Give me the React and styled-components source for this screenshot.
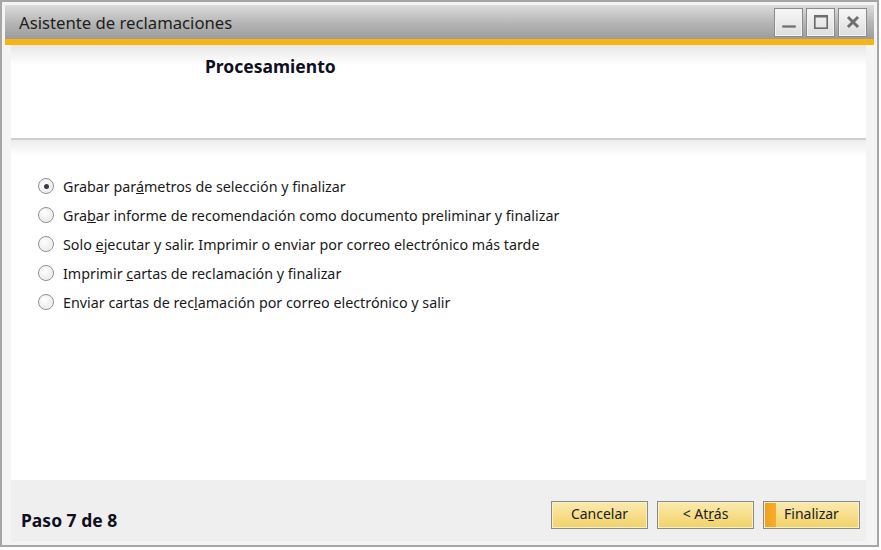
import React, { useState } from "react";
import styled, { createGlobalStyle } from "styled-components";

const GlobalStyle = createGlobalStyle`
  body {
    margin: 0;
    background: #ffffff;
    font-family: "Noto Sans", "DejaVu Sans", sans-serif;
  }
`;

const Window = styled.div`
  box-sizing: border-box;
  width: 879px;
  height: 547px;
  border: 2px solid #a6a6a6;
  background: #f4f4f4;
  padding: 3px 3px 4px 3px;
  display: flex;
  flex-direction: column;
`;

const TitleBar = styled.div`
  height: 34px;
  flex-shrink: 0;
  display: flex;
  align-items: center;
  justify-content: space-between;
  padding: 0 8px 0 14px;
  background: linear-gradient(#dcdcdc, #b4b4b4 55%, #9c9c9c);
  border-bottom: 6px solid #f7b416;
`;

const Title = styled.span`
  font-size: 16.7px;
  color: #1e1e1e;
`;

const Controls = styled.div`
  display: flex;
  gap: 5px;
`;

const CtrlButton = styled.div`
  width: 27px;
  height: 27px;
  box-sizing: border-box;
  border: 1px solid #f2f2f2;
  outline: 1px solid #8c8c8c;
  background: linear-gradient(#f6f6f6, #dedede);
  display: flex;
  align-items: center;
  justify-content: center;
`;

const Body = styled.div`
  flex: 1;
  display: flex;
  flex-direction: column;
  margin: 0 8px 0 6px;
  background: #ffffff;
`;

const Header = styled.div`
  height: 95px;
  flex-shrink: 0;
  background: linear-gradient(#e6e6e6, #ffffff 20px);
  border-bottom: 2px solid #cfcfcf;
  padding-left: 194px;
  box-sizing: border-box;
`;

const HeaderTitle = styled.div`
  font-weight: 700;
  font-size: 17.5px;
  color: #101020;
  padding-top: 9px;
`;

const Content = styled.div`
  flex: 1;
  background: linear-gradient(#ececec, #ffffff 16px);
  padding: 36px 0 0 27px;
  display: flex;
  flex-direction: column;
  gap: 9px;
`;

const Option = styled.label`
  display: flex;
  align-items: center;
  gap: 9px;
  font-size: 14.3px;
  color: #1a1a1a;
  height: 20px;
  cursor: default;
`;

const Radio = styled.span`
  width: 16px;
  height: 16px;
  flex-shrink: 0;
  box-sizing: border-box;
  border-radius: 50%;
  border: 1px solid #909090;
  box-shadow: inset 0 0 0 1px #f4f4f4;
  background: radial-gradient(circle at 40% 35%, #ffffff, #e2e2e2);
  display: flex;
  align-items: center;
  justify-content: center;

  &::after {
    content: "";
    width: 5px;
    height: 5px;
    border-radius: 50%;
    background: #3a3a48;
    display: ${(p) => (p.$checked ? "block" : "none")};
  }
`;

const U = styled.span`
  text-decoration: underline;
`;

const Footer = styled.div`
  height: 61px;
  flex-shrink: 0;
  background: #efefef;
  display: flex;
  align-items: center;
  justify-content: space-between;
  padding: 0 6px 0 10px;
`;

const Step = styled.div`
  font-weight: 700;
  font-size: 17.5px;
  color: #101020;
  padding-top: 18px;
`;

const Buttons = styled.div`
  display: flex;
  gap: 9px;
  padding-top: 8px;
`;

const Button = styled.button`
  width: 97px;
  height: 28px;
  box-sizing: border-box;
  border: 1px solid #8a8a8a;
  background: ${(p) =>
    p.$primary
      ? "linear-gradient(90deg, #f0a020 0, #f6ac2c 12px, transparent 12px), linear-gradient(#faeab0, #f2d266)"
      : "linear-gradient(#faeab0, #f2d266)"};
  font-family: "Noto Sans", "DejaVu Sans", sans-serif;
  font-size: 14px;
  color: #202020;
  padding: 0 0 3px 0;
  box-shadow: inset 0 0 0 1px #fbf1c8;
`;

const options = [
  [<>Grabar par<U>á</U>metros de selección y finalizar</>, true],
  [<>Gra<U>b</U>ar informe de recomendación como documento preliminar y finalizar</>, false],
  [<>Solo <U>e</U>jecutar y salir. Imprimir o enviar por correo electrónico más tarde</>, false],
  [<>Imprimir <U>c</U>artas de reclamación y finalizar</>, false],
  [<>Enviar cartas de rec<U>l</U>amación por correo electrónico y salir</>, false],
];

export default function App() {
  const [sel, setSel] = useState(0);
  return (
    <>
      <GlobalStyle />
      <Window>
        <TitleBar>
          <Title>Asistente de reclamaciones</Title>
          <Controls>
            <CtrlButton>
              <svg width="18" height="18" viewBox="0 0 16 16">
                <rect x="2" y="11" width="12" height="2" fill="#6e6e6e" />
              </svg>
            </CtrlButton>
            <CtrlButton>
              <svg width="18" height="18" viewBox="0 0 16 16">
                <rect x="2.5" y="2.5" width="11" height="11" fill="none" stroke="#6e6e6e" strokeWidth="1.5" />
                <rect x="2" y="2" width="12" height="2" fill="#6e6e6e" />
              </svg>
            </CtrlButton>
            <CtrlButton>
              <svg width="18" height="18" viewBox="0 0 16 16">
                <path d="M3.5 3.5 L12.5 12.5 M12.5 3.5 L3.5 12.5" stroke="#6e6e6e" strokeWidth="2.6" />
              </svg>
            </CtrlButton>
          </Controls>
        </TitleBar>
        <Body>
          <Header>
            <HeaderTitle>Procesamiento</HeaderTitle>
          </Header>
          <Content>
            {options.map(([text], i) => (
              <Option key={i} onClick={() => setSel(i)}>
                <Radio $checked={sel === i} />
                <span>{text}</span>
              </Option>
            ))}
          </Content>
          <Footer>
            <Step>Paso 7 de 8</Step>
            <Buttons>
              <Button>Cancelar</Button>
              <Button>&lt; At<U>r</U>ás</Button>
              <Button $primary>Finalizar</Button>
            </Buttons>
          </Footer>
        </Body>
      </Window>
    </>
  );
}
